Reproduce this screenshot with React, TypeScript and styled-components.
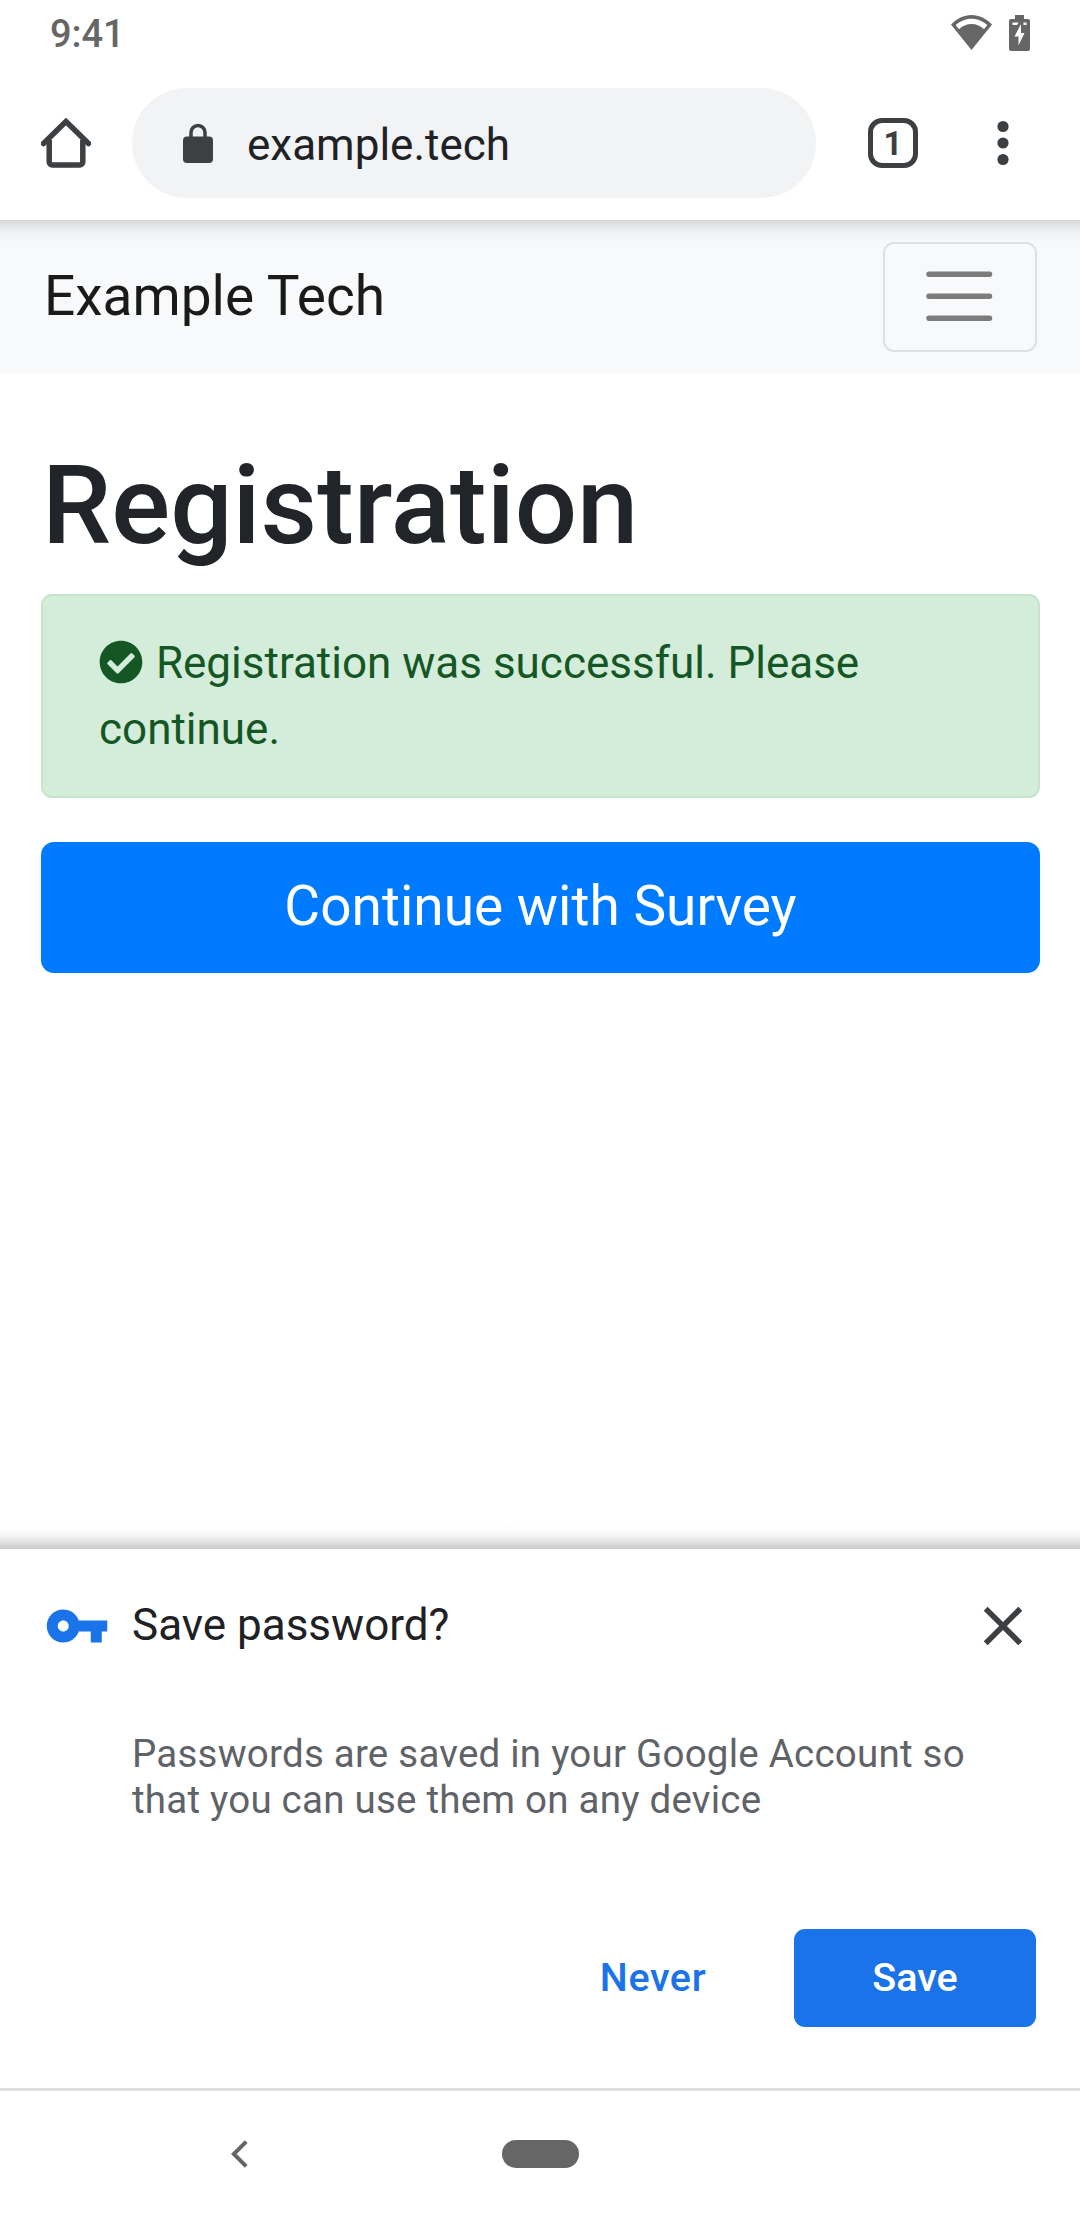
import React from "react";
import styled, { createGlobalStyle } from "styled-components";

const GlobalStyle = createGlobalStyle`
  * { box-sizing: border-box; }
  html, body { margin: 0; padding: 0; background: #fff; }
  body { font-family: Roboto, "Noto Sans", sans-serif; }
  button { font-family: inherit; margin: 0; padding: 0; border: 0; background: none; }
  svg { display: block; flex: none; }
`;

const Screen = styled.div`
  width: 1080px;
  height: 2220px;
  display: flex;
  flex-direction: column;
  background: #fff;
  overflow: hidden;
`;

const StatusBar = styled.header`
  height: 66px;
  flex: none;
  display: flex;
  justify-content: space-between;
  padding: 0 50px;
`;

const Clock = styled.time`
  margin-top: 12px;
  font-size: 38px;
  line-height: 45px;
  font-weight: 500;
  letter-spacing: -0.1px;
  color: #666;
`;

const StatusIcons = styled.div`
  display: flex;
  gap: 17px;
  padding-top: 15px;
`;

const Toolbar = styled.div`
  height: 154px;
  flex: none;
  display: flex;
  align-items: center;
`;

const ToolButton = styled.button<{ $width: number }>`
  width: ${(p) => p.$width}px;
  height: 110px;
  display: flex;
  align-items: center;
  justify-content: center;
`;

const AddressBar = styled.div`
  width: 684px;
  height: 110px;
  flex: none;
  display: flex;
  align-items: center;
  padding-left: 51px;
  border-radius: 55px;
  background: #f1f3f4;
`;

const Address = styled.span`
  margin: 3px 0 0 34px;
  font-size: 44px;
  line-height: 52px;
  color: #202124;
`;

const TabCount = styled.span`
  width: 50px;
  height: 50px;
  display: flex;
  align-items: center;
  justify-content: center;
  border: 5.5px solid #3c4043;
  border-radius: 14px;
  font-size: 33px;
  line-height: 39px;
  font-weight: 700;
  color: #3c4043;
`;

const Navbar = styled.nav`
  height: 154px;
  flex: none;
  display: flex;
  align-items: center;
  justify-content: space-between;
  padding: 0 43.5px 0 44px;
  background: linear-gradient(#d3d5d6 0, #dcdedf 3px, #e8eaeb 8px, #f1f3f4 14px, #f4f6f7 19px, #f8f9fa 23px);
`;

const Brand = styled.span`
  padding-bottom: 2px;
  font-size: 55px;
  line-height: 82px;
  color: #1a1a1a;
`;

const Toggler = styled.button`
  width: 154px;
  height: 110px;
  display: flex;
  align-items: center;
  justify-content: center;
  padding-bottom: 1px;
  border: 2px solid #dfe0e1;
  border-radius: 11px;
`;

const Content = styled.main`
  flex: 1;
  padding: 66px 40px 0 41px;
`;

const Title = styled.h1`
  margin: 0 0 22px;
  padding-left: 1px;
  font-size: 110px;
  line-height: 132px;
  font-weight: 500;
  color: #212529;
`;

const Alert = styled.div`
  height: 204px;
  margin-bottom: 44px;
  padding: 34px 56px;
  border: 2px solid #c3e6cb;
  border-radius: 11px;
  background: #d4edda;
  font-size: 44px;
  line-height: 66px;
  color: #155724;
`;

const AlertIcon = styled.svg`
  display: inline-block;
  width: 44px;
  height: 44px;
  margin-right: 2px;
  vertical-align: -5.5px;
`;

const ContinueButton = styled.button`
  width: 100%;
  height: 131px;
  display: flex;
  align-items: center;
  justify-content: center;
  padding-bottom: 3px;
  border-radius: 13px;
  background: #007bff;
  font-size: 55px;
  line-height: 82px;
  color: #fff;
`;

const SheetShadow = styled.div`
  height: 24px;
  flex: none;
  background: linear-gradient(#fff 0, #fafafa 7px, #f1f1f1 12px, #e2e2e2 17px, #d2d2d2 21px, #cbcbcb 24px);
`;

const Sheet = styled.section`
  height: 539px;
  flex: none;
  display: flex;
  flex-direction: column;
  padding: 43px 44px 0;
`;

const SheetHeader = styled.div`
  height: 67px;
  display: flex;
  align-items: center;
`;

const SheetTitle = styled.h2`
  flex: 1;
  margin: 0 0 0 22px;
  padding-bottom: 2px;
  font-size: 44px;
  line-height: 52px;
  font-weight: 400;
  color: #202124;
`;

const SheetText = styled.p`
  width: 850px;
  margin: 72px 0 0 88px;
  font-size: 38.5px;
  line-height: 46px;
  letter-spacing: 0.23px;
  color: #5f6368;
`;

const SheetActions = styled.div`
  display: flex;
  justify-content: flex-end;
  margin-top: 106px;
`;

const ActionButton = styled.button<{ $filled?: boolean }>`
  width: ${(p) => (p.$filled ? 242 : 282)}px;
  height: 98px;
  border-radius: 11px;
  background: ${(p) => (p.$filled ? "#1a73e8" : "transparent")};
  color: ${(p) => (p.$filled ? "#fff" : "#1a73e8")};
  font-size: 39.5px;
  line-height: 98px;
  font-weight: 500;
  letter-spacing: ${(p) => (p.$filled ? 0 : 0.6)}px;
`;

const SystemNav = styled.footer`
  height: 132px;
  flex: none;
  display: grid;
  grid-template-columns: 478px 125px 477px;
  align-items: center;
  justify-items: center;
  padding-bottom: 3px;
  border-top: 3px solid #e0e0e0;
`;

const HomePill = styled.span`
  width: 77px;
  height: 28px;
  border-radius: 14px;
  background: #666;
`;

const WifiIcon = () => (
  <svg width="41" height="35" viewBox="0 0 41 35">
    <path d="M20.5 35L0 9.5C5.7 3.6 12.8 0 20.5 0S35.3 3.6 41 9.5z" fill="#666" />
    <path d="M4.6 10C9 6.2 14.4 3.7 20.5 3.7S32 6.2 36.4 10L33 14.2C29.5 11 25.5 9 20.5 9S11.500 11 8 14.2z" fill="#fff" />
  </svg>
);

const BatteryIcon = () => (
  <svg width="21" height="36" viewBox="0 0 21 36">
    <path d="M6 0h9v4h4a2 2 0 0 1 2 2v28a2 2 0 0 1-2 2H2a2 2 0 0 1-2-2V6a2 2 0 0 1 2-2h4z" fill="#666" />
    <path d="M3.5 7.5h6l-1.500 2.5H3.5zM14.5 7.5h3v2.5h-3zM12 9v9h3.5L9.5 30.5V21.500H5.5z" fill="#fff" />
  </svg>
);

const HomeIcon = () => (
  <svg width="50" height="50" viewBox="0 0 50 50" fill="none" stroke="#3c4043" strokeWidth="5.5">
    <path d="M8.2 22v22a3 3 0 0 0 3 3h27.6a3 3 0 0 0 3-3V22" />
    <path d="M2.5 25.5L25 3.5l22.5 22" strokeLinecap="round" />
  </svg>
);

const LockIcon = () => (
  <svg width="30" height="40" viewBox="0 0 30 40">
    <rect y="13.5" width="30" height="26.5" rx="4" fill="#3c4043" />
    <path d="M8 15V9.5a7 7 0 0 1 14 0V15" fill="none" stroke="#3c4043" strokeWidth="3.5" />
  </svg>
);

const MoreIcon = () => (
  <svg width="12" height="46" viewBox="0 0 12 46" fill="#3c4043">
    <circle cx="6" cy="6.5" r="5.6" />
    <circle cx="6" cy="23" r="5.6" />
    <circle cx="6" cy="39.5" r="5.6" />
  </svg>
);

const MenuIcon = () => (
  <svg width="82.5" height="82.5" viewBox="0 0 30 30">
    <path d="M4 7h22M4 15h22M4 23h22" stroke="rgba(0,0,0,0.5)" strokeWidth="2" strokeLinecap="round" />
  </svg>
);

const KeyIcon = () => (
  <svg width="66" height="66" viewBox="0 0 24 24" fill="#1a73e8">
    <path d="M12.65 10C11.83 7.67 9.61 6 7 6c-3.31 0-6 2.69-6 6s2.69 6 6 6c2.61 0 4.83-1.67 5.65-4H17v4h4v-4h2v-4H12.65zM7 14c-1.1 0-2-.9-2-2s.9-2 2-2 2 .9 2 2-.9 2-2 2z" />
  </svg>
);

const CloseIcon = () => (
  <svg width="66" height="66" viewBox="0 0 24 24" fill="#3c4043">
    <path d="M19 6.41L17.59 5 12 10.59 6.41 5 5 6.41 10.59 12 5 17.59 6.41 19 12 13.41 17.59 19 19 17.59 13.41 12z" />
  </svg>
);

const BackIcon = () => (
  <svg width="17" height="28" viewBox="0 0 17 28">
    <path d="M15.2 1.6L2.8 14l12.4 12.4" fill="none" stroke="#666" strokeWidth="4" />
  </svg>
);

export default function App() {
  return (
    <Screen>
      <GlobalStyle />
      <StatusBar>
        <Clock>9:41</Clock>
        <StatusIcons>
          <WifiIcon />
          <BatteryIcon />
        </StatusIcons>
      </StatusBar>
      <Toolbar>
        <ToolButton $width={132} aria-label="Home">
          <HomeIcon />
        </ToolButton>
        <AddressBar>
          <LockIcon />
          <Address>example.tech</Address>
        </AddressBar>
        <ToolButton $width={154} aria-label="Tabs">
          <TabCount>1</TabCount>
        </ToolButton>
        <ToolButton $width={66} aria-label="More">
          <MoreIcon />
        </ToolButton>
      </Toolbar>
      <Navbar>
        <Brand>Example Tech</Brand>
        <Toggler aria-label="Menu">
          <MenuIcon />
        </Toggler>
      </Navbar>
      <Content>
        <Title>Registration</Title>
        <Alert>
          <AlertIcon viewBox="0 0 512 512">
            <path
              fill="#155724"
              d="M504 256c0 136.967-111.033 248-248 248S8 392.967 8 256 119.033 8 256 8s248 111.033 248 248zM227.314 387.314l184-184c6.248-6.248 6.248-16.379 0-22.627l-22.627-22.627c-6.248-6.249-16.379-6.249-22.628 0L216 308.118l-70.059-70.059c-6.248-6.248-16.379-6.248-22.628 0l-22.627 22.627c-6.248 6.248-6.248 16.379 0 22.627l104 104c6.249 6.249 16.379 6.249 22.628.001z"
            />
          </AlertIcon>{" "}
          Registration was successful. Please continue.
        </Alert>
        <ContinueButton>Continue with Survey</ContinueButton>
      </Content>
      <SheetShadow />
      <Sheet>
        <SheetHeader>
          <KeyIcon />
          <SheetTitle>Save password?</SheetTitle>
          <CloseIcon />
        </SheetHeader>
        <SheetText>Passwords are saved in your Google Account so that you can use them on any device</SheetText>
        <SheetActions>
          <ActionButton>Never</ActionButton>
          <ActionButton $filled>Save</ActionButton>
        </SheetActions>
      </Sheet>
      <SystemNav>
        <BackIcon />
        <HomePill />
      </SystemNav>
    </Screen>
  );
}
